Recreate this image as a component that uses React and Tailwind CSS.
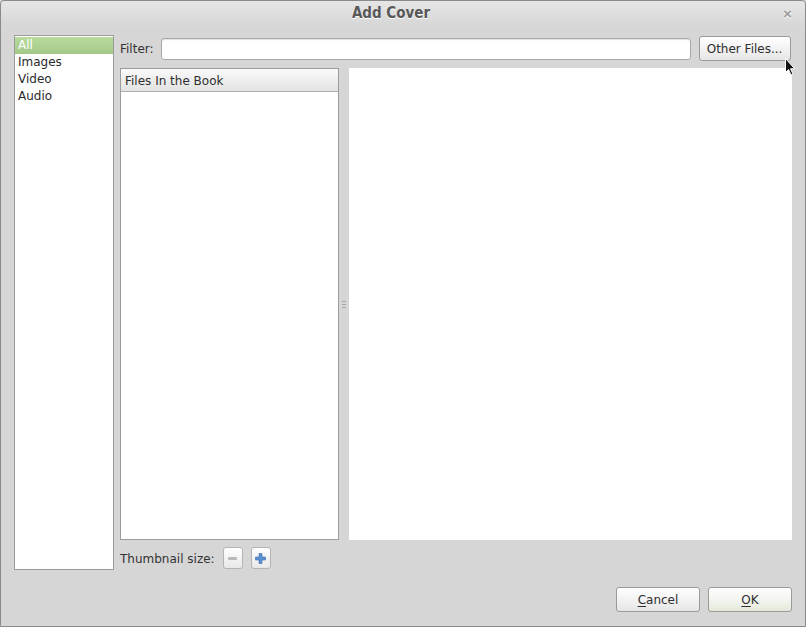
const font = { fontFamily: '"DejaVu Sans", "Liberation Sans", sans-serif' };

const ListItem = ({ label, selected }) => (
  <div
    className={
      selected
        ? 'h-[17px] leading-[17px] pl-[3px] text-white bg-gradient-to-b from-[#b9dc9f] to-[#a2c886]'
        : 'h-[17px] leading-[17px] pl-[3px] text-[#2a2a2a]'
    }
  >
    {label}
  </div>
);

const PushButton = ({ children, className = '', green }) => (
  <button
    className={
      'h-[25px] rounded-[3px] border border-[#9a9a9a] text-[12px] text-[#2e2e2e] shadow-[inset_0_1px_0_#ffffff] ' +
      (green
        ? 'bg-gradient-to-b from-[#fdfdfd] via-[#f4f6f0] to-[#e3e8da] '
        : 'bg-gradient-to-b from-[#ffffff] to-[#e6e6e6] ') +
      className
    }
  >
    {children}
  </button>
);

const SmallButton = ({ children }) => (
  <div className="w-[20px] h-[22px] rounded-[3px] border border-[#b4b4b4] bg-gradient-to-b from-[#ffffff] to-[#e8e8e8] flex items-center justify-center">
    {children}
  </div>
);

export default function App() {
  return (
    <div className="w-[806px] h-[627px] bg-[#d6d6d6] text-[12px]" style={font}>
      <div className="relative w-full h-full border border-[#8a8a8a] rounded-t-[4px] flex flex-col">
        {/* title bar */}
        <div className="h-[26px] shrink-0 flex items-center justify-center relative bg-gradient-to-b from-[#e6e6e6] to-[#d6d6d6] rounded-t-[4px] pr-[24px] pb-[2px]">
          <span
            className="text-[15px] font-bold text-[#585858] [text-shadow:0_1px_0_#ffffff]"
            style={{ fontFamily: '"DejaVu Sans Condensed", "DejaVu Sans", sans-serif' }}
          >
            Add Cover
          </span>
          <span className="absolute right-[12px] top-[3px] text-[13px] font-bold text-[#9a9a9a] [text-shadow:0_1px_0_#ffffff]">
            ×
          </span>
        </div>

        {/* body */}
        <div className="flex pl-[13px] pr-[13px] pt-[8px] gap-[6px]">
          {/* category list */}
          <div className="w-[100px] h-[535px] shrink-0 bg-white border border-[#9c9c9c] pt-px">
            <ListItem label="All" selected />
            <ListItem label="Images" />
            <ListItem label="Video" />
            <ListItem label="Audio" />
          </div>

          {/* right column */}
          <div className="flex-1 flex flex-col">
            <div className="h-[27px] flex items-center">
              <span className="text-[#333] mr-[7px]">Filter:</span>
              <div className="w-[530px] h-[22px] bg-white border border-[#a8a8a8] rounded-[3px] shadow-[inset_0_1px_1px_#e0e0e0]" />
              <PushButton className="ml-[8px] w-[92px]">Other Files...</PushButton>
            </div>

            <div className="mt-[6px] h-[472px] flex">
              <div className="w-[219px] h-full bg-white border border-[#9c9c9c] flex flex-col">
                <div className="h-[23px] border-b border-[#b0b0b0] bg-gradient-to-b from-[#fafafa] to-[#e2e2e2] pl-[4px] pt-px leading-[22px] text-[#2e2e2e]">
                  Files In the Book
                </div>
              </div>
              <div className="w-[10px] h-full flex items-center justify-center">
                <div className="flex flex-col gap-[2px]">
                  <div className="w-[4px] h-px bg-[#a8a8a8]" />
                  <div className="w-[4px] h-px bg-[#a8a8a8]" />
                  <div className="w-[4px] h-px bg-[#a8a8a8]" />
                </div>
              </div>
              <div className="flex-1 h-full bg-white" />
            </div>

            <div className="mt-[7px] h-[22px] flex items-center">
              <span className="text-[#333] mr-[8px] pt-[2px]">Thumbnail size:</span>
              <SmallButton>
                <div className="w-[9px] h-[3px] bg-[#b9b9b9] rounded-[1px]" />
              </SmallButton>
              <div className="w-[8px]" />
              <SmallButton>
                <svg width="11" height="11" viewBox="0 0 11 11">
                  <path d="M4 0.5h3v3.5h3.5v3h-3.5v3.5h-3v-3.5h-3.5v-3h3.5z" fill="#5b8fd0" stroke="#3f6fae" strokeWidth="0.6" />
                </svg>
              </SmallButton>
            </div>
          </div>
        </div>

        {/* dialog buttons */}
        <div className="mt-[17px] flex justify-end pr-[13px] gap-[8px]">
          <PushButton className="w-[84px]">
            <span className="underline underline-offset-2">C</span>ancel
          </PushButton>
          <PushButton className="w-[84px]" green>
            <span className="underline underline-offset-2">O</span>K
          </PushButton>
        </div>

        {/* mouse pointer */}
        <svg className="absolute left-[784px] top-[57px]" width="10" height="18" viewBox="0 0 10 18">
          <path d="M0.5 0.5v14l3-3 2.5 5.5 2-1-2.5-5.2h4.2z" fill="#111" stroke="#fff" strokeWidth="1" />
        </svg>
      </div>
    </div>
  );
}
